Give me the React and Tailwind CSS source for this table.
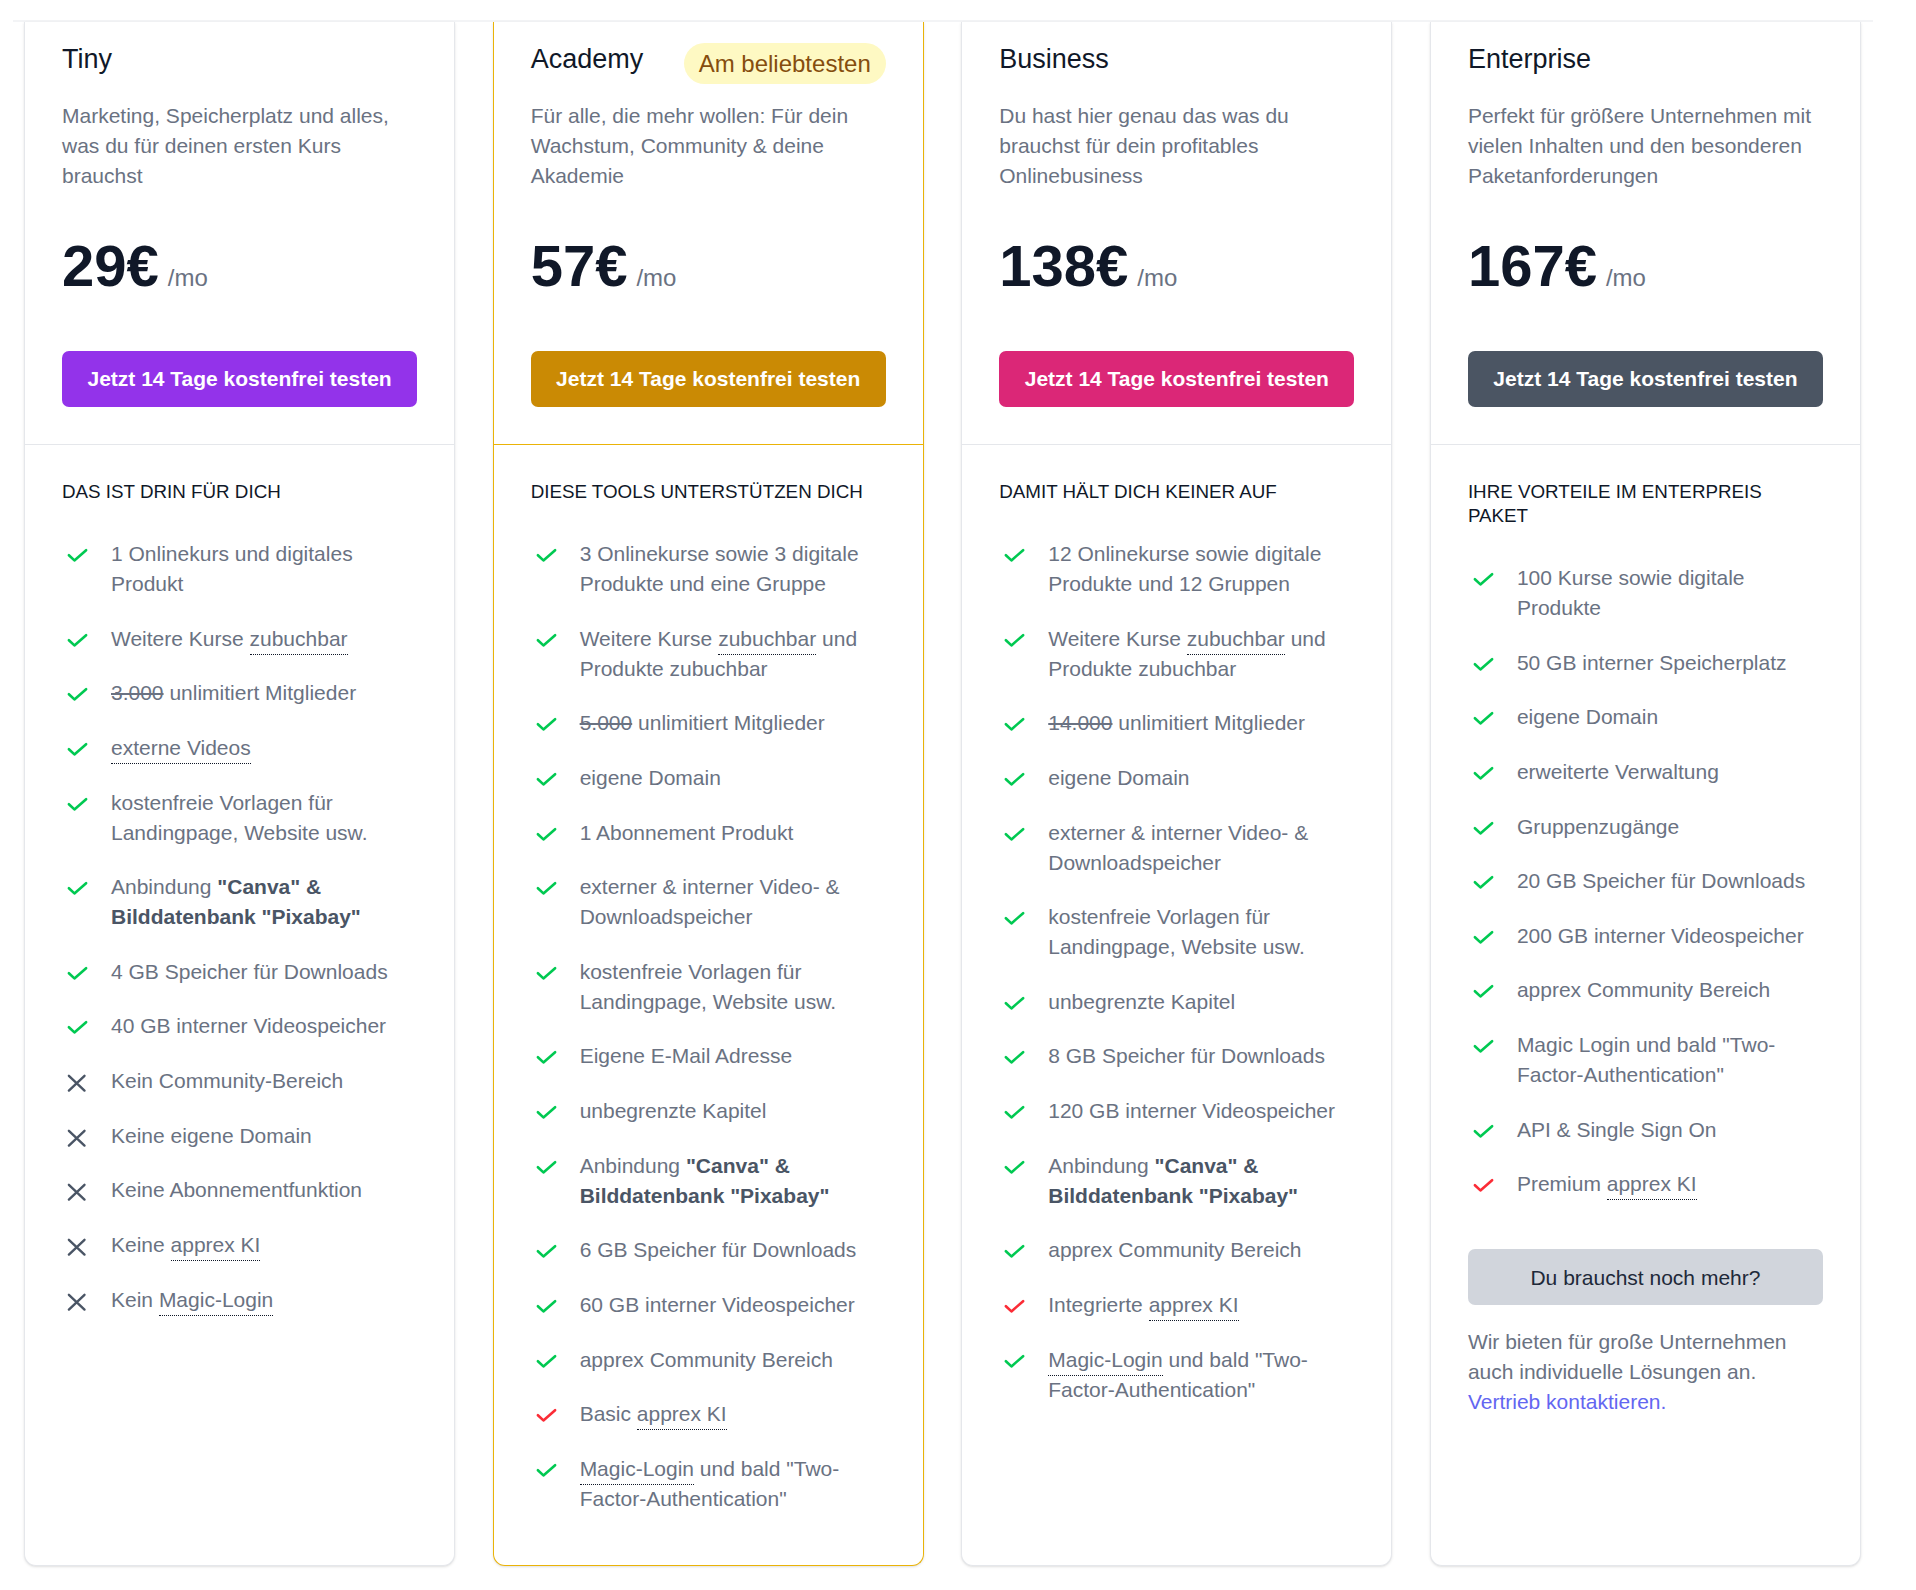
import React from "react";

function Check({ red }) {
  return (
    <svg viewBox="0 0 26 30" fill="none" stroke="currentColor" strokeWidth="2.6" strokeLinecap="round" strokeLinejoin="round"
      className={`w-[26px] h-[30px] shrink-0 ${red ? "text-red-500" : "text-green-500"}`}>
      <path d="M6.9 16.2 12.4 21.4 24.1 11.2" />
    </svg>
  );
}

function Cross() {
  return (
    <svg viewBox="0 0 26 30" fill="none" stroke="currentColor" strokeWidth="2.4" strokeLinecap="round"
      className="w-[26px] h-[30px] shrink-0 text-gray-600">
      <path d="M6.9 9.8 22.5 24.6M22.5 9.8 6.9 24.6" />
    </svg>
  );
}

const U = ({ children }) => <span className="border-b border-dotted border-gray-900 pb-[4px]">{children}</span>;
const S = ({ children }) => <span className="line-through">{children}</span>;
const B = ({ children }) => <span className="font-bold text-gray-600">{children}</span>;

const canva = <>Anbindung <B>"Canva" &amp; Bilddatenbank "Pixabay"</B></>;

const plans = [
  {
    name: "Tiny",
    desc: "Marketing, Speicherplatz und alles, was du für deinen ersten Kurs brauchst",
    price: "29€",
    btn: "bg-[#9333ea]",
    heading: "Das ist drin für dich",
    features: [
      ["c", "1 Onlinekurs und digitales Produkt"],
      ["c", <>Weitere Kurse <U>zubuchbar</U></>],
      ["c", <><S>3.000</S> unlimitiert Mitglieder</>],
      ["c", <U>externe Videos</U>],
      ["c", "kostenfreie Vorlagen für Landingpage, Website usw."],
      ["c", canva],
      ["c", "4 GB Speicher für Downloads"],
      ["c", "40 GB interner Videospeicher"],
      ["x", "Kein Community-Bereich"],
      ["x", "Keine eigene Domain"],
      ["x", "Keine Abonnementfunktion"],
      ["x", <>Keine <U>apprex KI</U></>],
      ["x", <>Kein <U>Magic-Login</U></>],
    ],
  },
  {
    name: "Academy",
    popular: true,
    desc: "Für alle, die mehr wollen: Für dein Wachstum, Community & deine Akademie",
    price: "57€",
    btn: "bg-[#ca8a04]",
    heading: "Diese Tools unterstützen dich",
    features: [
      ["c", "3 Onlinekurse sowie 3 digitale Produkte und eine Gruppe"],
      ["c", <>Weitere Kurse <U>zubuchbar</U> und Produkte zubuchbar</>],
      ["c", <><S>5.000</S> unlimitiert Mitglieder</>],
      ["c", "eigene Domain"],
      ["c", "1 Abonnement Produkt"],
      ["c", "externer & interner Video- & Downloadspeicher"],
      ["c", "kostenfreie Vorlagen für Landingpage, Website usw."],
      ["c", "Eigene E-Mail Adresse"],
      ["c", "unbegrenzte Kapitel"],
      ["c", canva],
      ["c", "6 GB Speicher für Downloads"],
      ["c", "60 GB interner Videospeicher"],
      ["c", "apprex Community Bereich"],
      ["r", <>Basic <U>apprex KI</U></>],
      ["c", <><U>Magic-Login</U> und bald "Two-Factor-Authentication"</>],
    ],
  },
  {
    name: "Business",
    desc: "Du hast hier genau das was du brauchst für dein profitables Onlinebusiness",
    price: "138€",
    btn: "bg-[#db2777]",
    heading: "Damit hält dich keiner auf",
    features: [
      ["c", "12 Onlinekurse sowie digitale Produkte und 12 Gruppen"],
      ["c", <>Weitere Kurse <U>zubuchbar</U> und Produkte zubuchbar</>],
      ["c", <><S>14.000</S> unlimitiert Mitglieder</>],
      ["c", "eigene Domain"],
      ["c", "externer & interner Video- & Downloadspeicher"],
      ["c", "kostenfreie Vorlagen für Landingpage, Website usw."],
      ["c", "unbegrenzte Kapitel"],
      ["c", "8 GB Speicher für Downloads"],
      ["c", "120 GB interner Videospeicher"],
      ["c", canva],
      ["c", "apprex Community Bereich"],
      ["r", <>Integrierte <U>apprex KI</U></>],
      ["c", <><U>Magic-Login</U> und bald "Two-Factor-Authentication"</>],
    ],
  },
  {
    name: "Enterprise",
    desc: "Perfekt für größere Unternehmen mit vielen Inhalten und den besonderen Paketanforderungen",
    price: "167€",
    btn: "bg-[#4b5563]",
    heading: "Ihre Vorteile im Enterpreis Paket",
    enterprise: true,
    features: [
      ["c", "100 Kurse sowie digitale Produkte"],
      ["c", "50 GB interner Speicherplatz"],
      ["c", "eigene Domain"],
      ["c", "erweiterte Verwaltung"],
      ["c", "Gruppenzugänge"],
      ["c", "20 GB Speicher für Downloads"],
      ["c", "200 GB interner Videospeicher"],
      ["c", "apprex Community Bereich"],
      ["c", 'Magic Login und bald "Two-Factor-Authentication"'],
      ["c", "API & Single Sign On"],
      ["r", <>Premium <U>apprex KI</U></>],
    ],
  },
];

function PlanCard({ plan }) {
  const border = plan.popular ? "border-[#eab308]" : "border-gray-200";
  return (
    <div className={`flex flex-col bg-white border border-t-0 rounded-b-[12px] shadow-sm ${border}`}>
      {/* Head */}
      <div className={`px-[37px] pt-[19px] pb-[37px] border-b ${border}`}>
        <div className="flex items-start justify-between h-[44px]">
          <h3 className="text-[27px] leading-[36px] text-gray-900">{plan.name}</h3>
          {plan.popular && (
            <span className="mt-[2px] h-[41px] px-[15px] rounded-full bg-[#fef9c3] text-[#854d0e] text-[24px] leading-[41px]">
              Am beliebtesten
            </span>
          )}
        </div>
        <p className="mt-[16px] text-[21px] leading-[30px] text-gray-500">{plan.desc}</p>
        <div className="mt-[46px] flex items-baseline">
          <span className="text-[58px] leading-none font-bold text-gray-900">{plan.price}</span>
          <span className="ml-[9px] text-[24px] text-gray-500">/mo</span>
        </div>
        <button className={`mt-[55px] w-full h-[56px] rounded-[7px] text-white font-bold text-[21px] ${plan.btn}`}>
          Jetzt 14 Tage kostenfrei testen
        </button>
      </div>

      {/* Features */}
      <div className="flex-1 px-[37px] pt-[35px] pb-[51px]">
        <h4 className="text-[18.8px] leading-[24px] uppercase text-gray-900">{plan.heading}</h4>
        <ul className="mt-[35px] flex flex-col gap-[24.65px]">
          {plan.features.map(([t, content], i) => (
            <li key={i} className="flex gap-[23px]">
              {t === "x" ? <Cross /> : <Check red={t === "r"} />}
              <span className="text-[21px] leading-[30px] text-gray-500">{content}</span>
            </li>
          ))}
        </ul>
        {plan.enterprise && (
          <>
            <button className="mt-[50px] w-full h-[56px] rounded-[7px] bg-gray-300 text-gray-800 text-[21px]">
              Du brauchst noch mehr?
            </button>
            <p className="mt-[22px] text-[21px] leading-[30px] text-gray-500">
              Wir bieten für große Unternehmen auch individuelle Lösungen an.{" "}
              <a href="#" className="text-[#6366f1]">Vertrieb kontaktieren.</a>
            </p>
          </>
        )}
      </div>
    </div>
  );
}

export default function App() {
  return (
    <div className="min-h-screen w-[1916px] bg-white font-['Liberation_Sans',Arial,sans-serif]">
      <div className="ml-[13px] w-[1860px] h-[22px] border-b-2 border-gray-100" />
      <div className="grid grid-cols-4 gap-[37.5px] pl-[24px] pr-[55px] pb-[25px]">
        {plans.map((p) => <PlanCard key={p.name} plan={p} />)}
      </div>
    </div>
  );
}
